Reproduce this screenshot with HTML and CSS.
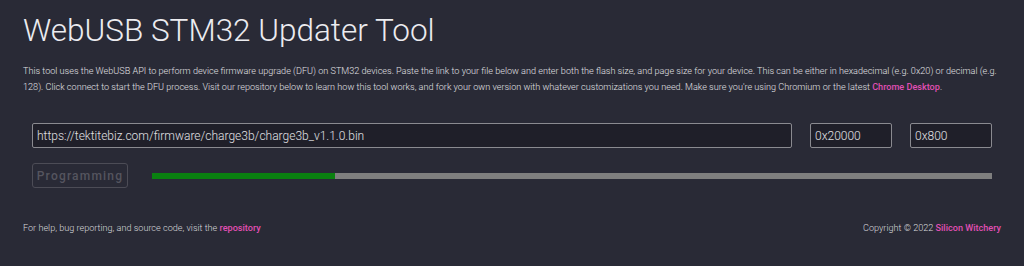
FILE: index.html
```html
<!DOCTYPE html>
<html lang="en">
<head>
    <meta charset="UTF-8">
    <meta name="viewport" content="width=device-width, initial-scale=1.0">
    <title>WebUSB STM32 Updater Tool</title>
    <link rel="stylesheet" href="styles.css">
</head>
<body>
    <main>
        <h1>WebUSB STM32 Updater Tool</h1>
        <p class="intro">This tool uses the WebUSB API to perform device firmware upgrade (DFU) on STM32 devices. Paste the link to your file below and enter both the flash size, and page size for your device. This can be either in hexadecimal (e.g. 0x20) or decimal (e.g. 128). Click connect to start the DFU process. Visit our repository below to learn how this tool works, and fork your own version with whatever customizations you need. Make sure you're using Chromium or the latest <a href="#">Chrome Desktop</a>.</p>

        <div id="updater">
            <div class="row">
                <input type="text" id="file-url" value="https://tektitebiz.com/firmware/charge3b/charge3b_v1.1.0.bin">
                <input type="text" id="flash-size" class="small-input" value="0x20000">
                <input type="text" id="page-size" class="small-input" value="0x800">
            </div>
            <div class="row">
                <button id="connect-button" disabled>Programming</button>
                <div class="progress">
                    <div class="progress-fill" style="width: 21.8%"></div>
                </div>
            </div>
        </div>
    </main>
    <footer>
        <span>For help, bug reporting, and source code, visit the <a href="#">repository</a></span>
        <span>Copyright © 2022 <a href="#">Silicon Witchery</a></span>
    </footer>
</body>
</html>
```

FILE: styles.css
```css
body {
    font-family: Roboto, "Noto Sans", sans-serif;
    background-color: #292a36;
    color: #e6e6ea;
    margin: 0;
    padding: 0 23px;
}

a {
    color: #e04fb4;
    text-decoration: none;
    font-weight: 500;
}

h1 {
    font-size: 31.5px;
    font-weight: 300;
    margin: 0;
    padding-top: 12px;
    line-height: 38px;
    color: #ececf0;
}

.intro {
    font-size: 9.1px;
    font-weight: 300;
    line-height: 16px;
    margin: 13px 0 0;
    color: #e0e0e4;
}

#updater {
    padding: 28px 9px 0;
}

.row {
    display: flex;
    align-items: center;
    gap: 18px;
    margin-bottom: 15px;
}

input {
    font-family: Roboto, "Noto Sans", sans-serif;
    font-size: 12px;
    font-weight: 300;
    color: #e0e0e4;
    background-color: #1f1f29;
    border: 1px solid #8a8a90;
    border-radius: 2px;
    height: 25px;
    box-sizing: border-box;
    padding: 0 4px;
    outline: none;
}

#file-url {
    flex: 1;
}

.small-input {
    width: 82px;
}

#connect-button {
    font-family: Roboto, "Noto Sans", sans-serif;
    font-size: 12px;
    font-weight: 500;
    letter-spacing: 1.2px;
    color: #55555f;
    background-color: transparent;
    border: 1px solid #4c4c56;
    border-radius: 3px;
    height: 25px;
    width: 96px;
    padding: 0;
    margin-right: 6px;
}

.progress {
    flex: 1;
    height: 6px;
    background-color: #7f7f7f;
}

.progress-fill {
    height: 100%;
    background-color: #0a8010;
}

footer {
    display: flex;
    justify-content: space-between;
    font-size: 9.1px;
    font-weight: 300;
    color: #d8d8dc;
    margin-top: 35px;
}
```
